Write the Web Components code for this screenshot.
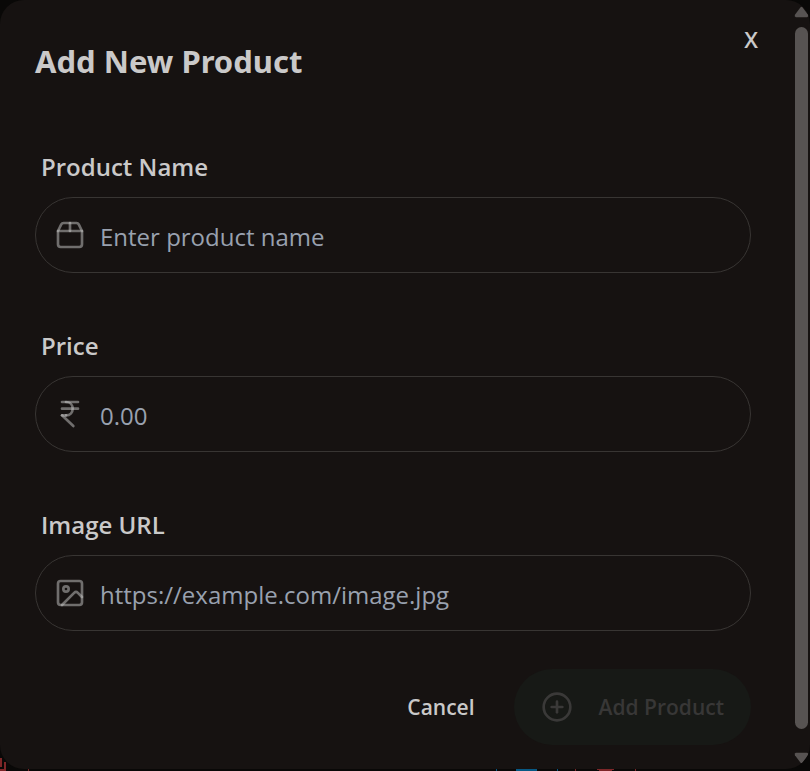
<!DOCTYPE html>
<html lang="en">
<head>
<meta charset="utf-8">
<title>Add New Product</title>
<style>
  html, body { height: 100%; margin: 0; background: #090807; overflow: hidden; }
  body { font-family: "Open Sans", "Noto Sans", sans-serif; color: #cac9c9; }
</style>
</head>
<body>
<product-dialog heading="Add New Product">
  <form-field label="Product Name" name="name" placeholder="Enter product name">
    <line-icon slot="icon" name="package"></line-icon>
  </form-field>
  <form-field label="Price" name="price" placeholder="0.00">
    <line-icon slot="icon" name="rupee"></line-icon>
  </form-field>
  <form-field label="Image URL" name="image" placeholder="https://example.com/image.jpg">
    <line-icon slot="icon" name="image"></line-icon>
  </form-field>
  <dialog-button slot="actions">Cancel</dialog-button>
  <dialog-button slot="actions" primary disabled><line-icon slot="icon" name="plus"></line-icon>Add Product</dialog-button>
</product-dialog>

<script>
  const ICONS = {
    package: '<path d="M3 9h18v10a2 2 0 0 1-2 2H5a2 2 0 0 1-2-2V9Z"/><path d="m3 9 2.45-4.9A2 2 0 0 1 7.24 3h9.52a2 2 0 0 1 1.8 1.1L21 9"/><path d="M12 3v6"/>',
    rupee: '<path d="M6 3h12"/><path d="M6 8h12"/><path d="m6 13 8.5 8"/><path d="M6 13h3"/><path d="M9 13c6.667 0 6.667-10 0-10"/>',
    image: '<rect x="3" y="3" width="18" height="18" rx="2"/><circle cx="9" cy="9" r="2"/><path d="m21 15-3.086-3.086a2 2 0 0 0-2.828 0L6 21"/>',
    plus: '<circle cx="12" cy="12" r="10"/><path d="M8 12h8"/><path d="M12 8v8"/>'
  };

  class BaseElement extends HTMLElement {
    constructor() { super(); this.attachShadow({ mode: 'open' }); }
    connectedCallback() { this.shadowRoot.innerHTML = this.render(); }
    attr(name) { return this.getAttribute(name) || ''; }
  }

  customElements.define('line-icon', class extends BaseElement {
    render() {
      return `<style>
        :host { display: block; flex: none; width: 32px; height: 32px; color: var(--icon-color, rgb(202 201 201 / .5)); }
        svg { display: block; width: 100%; height: 100%; }
      </style>
      <svg viewBox="0 0 24 24" fill="none" stroke="currentColor" stroke-width="2" stroke-linecap="round" stroke-linejoin="round" aria-hidden="true">${ICONS[this.attr('name')]}</svg>`;
    }
  });

  customElements.define('form-field', class extends BaseElement {
    render() {
      return `<style>
        :host { display: flex; flex-direction: column; gap: 14px; }
        label { padding: 0 6px; font-size: 24px; font-weight: 600; line-height: 32px; }
        .box { display: flex; align-items: center; gap: 14px; padding: 19px 18px; border: 1px solid #383533; border-radius: 38px; }
        .box:focus-within { border-color: #6b6866; }
        input { flex: 1; min-width: 0; height: 36px; box-sizing: border-box; margin: 0; padding: 2px 0 0; border: 0; outline: 0; background: none; color: inherit; font: 24px/32px "Open Sans", "Noto Sans", sans-serif; }
        input::placeholder { color: #99a1af; opacity: 1; }
      </style>
      <label for="input">${this.attr('label')}</label>
      <div class="box">
        <slot name="icon"></slot>
        <input id="input" type="text" name="${this.attr('name')}" placeholder="${this.attr('placeholder')}">
      </div>`;
    }
  });

  customElements.define('dialog-button', class extends BaseElement {
    render() {
      const primary = this.hasAttribute('primary');
      return `<style>
        :host { display: block; }
        button { display: flex; align-items: center; gap: 26px; margin: 0; padding: 22px 39px; border: 0; border-radius: 38px; background: none; color: inherit; font: 600 21px/32px "Open Sans", "Noto Sans", sans-serif; cursor: pointer; }
        button.primary { --icon-color: #3a3938; padding: 22px 27px; background: #171916; color: #383736; cursor: default; }
      </style>
      <button type="button" class="${primary ? 'primary' : ''}" ${this.hasAttribute('disabled') ? 'disabled' : ''}><slot name="icon"></slot><span><slot></slot></span></button>`;
    }
  });

  customElements.define('scroll-rail', class extends BaseElement {
    render() {
      return `<style>
        :host { display: flex; flex-direction: column; align-items: center; flex: none; width: 17px; padding: 6px 0 5px; box-sizing: border-box; color: #575352; }
        svg { display: block; flex: none; width: 15px; height: 12px; fill: currentColor; }
        .thumb { flex: 1; width: 13px; margin: 9px 0 23px; border-radius: 7px; background: currentColor; }
      </style>
      <svg viewBox="0 0 16 12" aria-hidden="true"><path d="M7 1Q8 0 9 1L15 9Q16 11 14 11.500H2Q0 11 1 9Z"/></svg>
      <div class="thumb"></div>
      <svg viewBox="0 0 16 12" aria-hidden="true"><path d="M7 11Q8 12 9 11L15 3Q16 1 14 .5H2Q0 1 1 3Z"/></svg>`;
    }
  });

  customElements.define('page-backdrop', class extends BaseElement {
    render() {
      return `<style>
        :host { display: block; }
        svg { display: block; width: 100%; height: 100%; }
      </style>
      <svg viewBox="0 0 810 14" preserveAspectRatio="xMinYMax slice" fill="none" aria-hidden="true">
        <path d="M0 2h1v7H0M5 5v8H0" stroke="#7d2628" stroke-width="2"/>
        <path d="M28 12h1v2h-1zM575 12h1v2h-1zM635 12h1v2h-1zM597 12h17v1h-2v1h-13v-1h-2z" fill="#7d2628"/>
        <path d="M496 12h1v2h-1zM557 12h1v2h-1zM516 12h21v2h-21z" fill="#075985"/>
      </svg>`;
    }
  });

  customElements.define('product-dialog', class extends BaseElement {
    render() {
      return `<style>
        :host { display: block; position: relative; height: 100%; box-sizing: border-box; padding-bottom: 2px; }
        page-backdrop { position: absolute; left: 0; right: 0; bottom: 0; height: 14px; }
        section { position: relative; display: flex; height: 100%; box-sizing: border-box; border-radius: 24px; background: #161211; overflow: hidden; }
        form { flex: 1; min-width: 0; padding: 39px 42px 0 35px; }
        h2 { margin: 0; font: 700 31px/44px "Noto Sans", "Open Sans", sans-serif; }
        .close { position: absolute; top: 23px; right: 43px; width: 32px; height: 32px; padding: 0; border: 0; background: none; color: inherit; font: 600 22px/32px "Open Sans", "Noto Sans", sans-serif; cursor: pointer; }
        .fields { display: flex; flex-direction: column; gap: 57px; margin-top: 68px; }
        .actions { display: flex; justify-content: flex-end; margin-top: 38px; }
      </style>
      <page-backdrop></page-backdrop>
      <section role="dialog" aria-labelledby="title">
        <form>
          <h2 id="title">${this.attr('heading')}</h2>
          <button class="close" type="button" aria-label="Close">X</button>
          <div class="fields"><slot></slot></div>
          <div class="actions"><slot name="actions"></slot></div>
        </form>
        <scroll-rail></scroll-rail>
      </section>`;
    }
  });
</script>
</body>
</html>
